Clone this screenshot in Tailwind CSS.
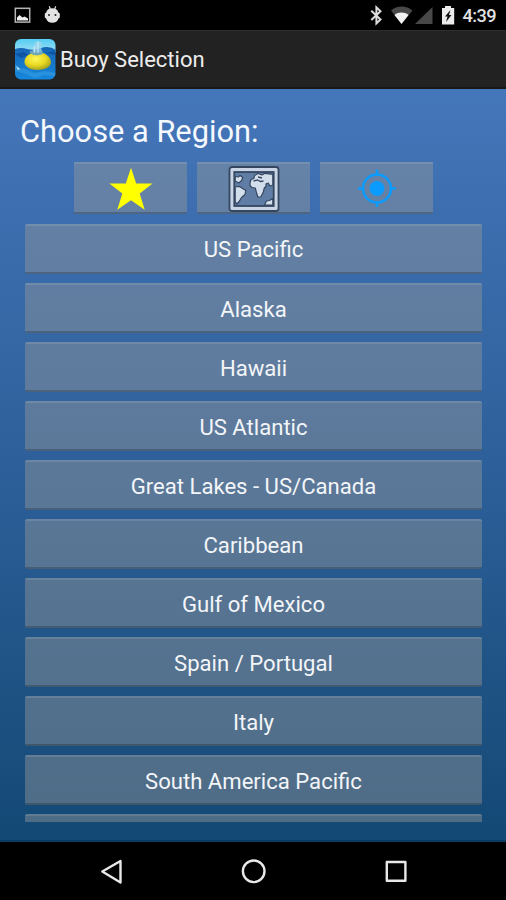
<!DOCTYPE html>
<html lang="en">
<head>
<meta charset="utf-8">
<title>Buoy Selection</title>
<script src="https://cdn.jsdelivr.net/npm/@tailwindcss/browser@4"></script>
</head>
<body class="bg-black">
<div class="w-[506px] h-[900px] flex flex-col overflow-hidden bg-black font-[Roboto,'Liberation_Sans',sans-serif]">
  <!-- Status bar -->
  <div class="h-[30px] shrink-0 flex items-center">
    <svg class="w-[506px] h-[30px]" viewBox="0 0 506 30">
      <rect x="15.3" y="8.3" width="14.4" height="13.8" fill="none" stroke="#b5b5b5" stroke-width="1.5"/>
      <path d="M17 20.500v-3l2.500-2.500 3 2.500 2-1 3.500 2v2z" fill="#eee"/>
      <path d="M49.300 6.300l1 3M55.700 6.300l-1 3" stroke="#d0d0d0" stroke-width="1.300"/>
      <path d="M46.200 12.500c.8-3 3-4.300 6.100-4.300s5.300 1.300 6.100 4.300l1.400 1v4l-1.300 1c-.7 2.800-3 4.300-6.200 4.300s-5.500-1.500-6.200-4.300l-1.300-1v-4z" fill="#e4e4e4"/>
      <circle cx="49" cy="15" r="1" fill="#222"/><circle cx="55.500" cy="15" r="1" fill="#222"/>
      <path d="M371.300 10.800l9.200 8.700-4.100 4V7.300l4.100 4-9.200 8.700" fill="none" stroke="#ddd" stroke-width="2"/>
      <path d="M391 10.500C397 5 406 5 412.500 10.500L401.500 24z" fill="#484848"/>
      <path d="M394.500 15C398.500 11.800 404.500 11.800 408.500 15L401.500 24z" fill="#f2f2f2"/>
      <path d="M432.500 7v17H415z" fill="#484848"/>
      <path d="M442 8h3V6h6v2h3.200v16.500H442z" fill="#ececec"/>
      <path d="M450.500 10l-5.500 6.500h2.500l-1.500 5.500 5.500-7h-2.500z" fill="#111"/>
      <text x="462.500" y="22.300" font-size="18.200" font-weight="500" fill="#e2e2e2" textLength="34">4:39</text>
    </svg>
  </div>
  <!-- Action bar -->
  <div class="h-[58.5px] shrink-0 bg-[#222] border-t border-[#2e2e2e] border-b-2 border-b-[#171713] flex items-center pl-[15px] pt-[2px]">
    <svg class="w-[41px] h-[41px] shrink-0" viewBox="0 0 41 41">
      <defs>
        <clipPath id="tile"><rect width="40.500" height="40.500" rx="6"/></clipPath>
        <linearGradient id="sky" x1="0" y1="0" x2="0" y2="1"><stop offset="0" stop-color="#54cdf2"/><stop offset="1" stop-color="#a5e0f5"/></linearGradient>
        <linearGradient id="sea" x1="0" y1="0" x2="0" y2="1"><stop offset="0" stop-color="#1765b4"/><stop offset="1" stop-color="#1688dd"/></linearGradient>
        <radialGradient id="buoy" cx=".42" cy=".35" r=".7"><stop offset="0" stop-color="#fff75a"/><stop offset=".55" stop-color="#e8d821"/><stop offset="1" stop-color="#9c9a20"/></radialGradient>
      </defs>
      <g clip-path="url(#tile)">
        <rect width="41" height="14" fill="url(#sky)"/>
        <path d="M0 10q6-2 12 0t14-1 15 2v30H0z" fill="url(#sea)"/>
        <path d="M0 15l9-2 5 3-8 3z M30 14l11-2v4z" fill="#0c4b96" opacity=".7"/>
        <path d="M0 25l5 4 6 1 8 4 11-2 11 2v3l-12-1-9 3-9-4-11-3z" fill="#57b9ee" opacity=".3"/>
        <path d="M1 27l4 3-2 1z" fill="#d5f0fb"/>
        <path d="M15 17l4-9 1-5h7l-1 5 2 9z" fill="#9ed6e8" opacity=".75"/>
        <path d="M9.500 23c0-4 3-7 6-8.500 4 2.500 10 2 13-.5 4 2 7.500 5 7.500 9.500 0 4.500-6 7.500-13.500 7.500S9.500 27.500 9.500 23z" fill="url(#buoy)"/>
        <path d="M14.500 13.500q7 5 14 1l-1-2q-6 2-12-1z" fill="#6fa5b9"/>
        <path d="M23 2v12M19.500 7v7" stroke="#dceff5" stroke-width="1.200" opacity=".7"/>
      </g>
    </svg>
    <div class="ml-[4px] text-[22px] leading-[28px] text-[#ececec] whitespace-nowrap pt-[1px]">Buoy Selection</div>
  </div>
  <!-- Content -->
  <div class="h-[753.5px] shrink-0 flex flex-col bg-linear-to-b from-[#4476ba] via-[#2d609a] to-[#134975] border-b-2 border-[#0b3a60]">
    <div class="h-[73.5px] shrink-0 pl-[20px] pt-[23px] text-[30.8px] leading-[40px] text-[#f5f8fc] whitespace-nowrap">Choose a Region:</div>
    <div class="flex gap-[10px] pl-[74px] h-[61.5px] shrink-0">
      <div class="w-[113px] h-[52px] rounded-[1px] bg-[#949699]/45 border-t-2 border-t-white/10 border-b-2 border-b-black/20 flex items-center justify-center pt-[2px]">
        <svg class="w-[44px] h-[44px]" viewBox="0 0 44 44"><path d="M22 .8l5.200 15.700h16.400L30.700 26.500l5 16.200L22 33.300 8.300 42.700l5-16.200L.4 16.500h16.400z" fill="#ff0"/></svg>
      </div>
      <div class="w-[113px] h-[52px] rounded-[1px] bg-[#949699]/45 border-t-2 border-t-white/10 border-b-2 border-b-black/20 flex items-center justify-center pt-[2px]">
        <svg class="w-[52px] h-[46px]" viewBox="0 0 52 46">
          <rect x="1.500" y="1" width="49" height="44" rx="2.500" fill="#c9d5e6" stroke="#35475f" stroke-width="1.800"/>
          <rect x="6.300" y="6" width="39.400" height="34" fill="#607da5" stroke="#35475f" stroke-width="1.800"/>
          <g fill="#d3deed" stroke="#35475f" stroke-width="1.200" stroke-linejoin="round">
            <path d="M7.200 10.500l3 .5 2-1.500 2.500 2-1 3-3 2.500-3.500-2z"/>
            <path d="M7.200 21l4-.7 3 2 3.600 2.200-.8 4-3.500 3-2 3.500-2.500 3-1.800-2z"/>
            <path d="M22 17l1-3.500 3-1 .5-3L30 7.500l4 1.500 3-1.700 7.800 1V19l-3 1-1.500-3-2.500 1 .5 2-2 2-1 4-2.500 5h-3l-1.500-5-1-4-3.500-.5-1.800-2z"/>
            <path d="M36.500 39l2-4 3-.5 3.300-2V39z"/>
          </g>
          <path d="M25.500 15l4-1 3 1.500 3-.5M30 11l4 1" fill="none" stroke="#35475f" stroke-width="1.300"/>
        </svg>
      </div>
      <div class="w-[113px] h-[52px] rounded-[1px] bg-[#949699]/45 border-t-2 border-t-white/10 border-b-2 border-b-black/20 flex items-center justify-center">
        <svg class="w-[38px] h-[38px]" viewBox="0 0 38 38"><circle cx="19" cy="19.500" r="7.400" fill="#0a9bff"/><circle cx="19" cy="19.500" r="14" fill="none" stroke="#0a9bff" stroke-width="2.500"/><path d="M19 .5v6M19 32.500v6M0 19.500h6M32 19.500h6" stroke="#0a9bff" stroke-width="2.500"/></svg>
      </div>
    </div>
    <!-- Scrolling region list -->
    <div id="regions" class="ml-[25px] mr-[24px] h-[598.5px] shrink-0 overflow-hidden flex flex-col gap-[9.1px] text-[22.1px] text-[#f3f5f8]"></div>
  </div>
  <!-- Navigation bar -->
  <div class="h-[58px] shrink-0 bg-black">
    <svg class="w-[506px] h-[58px]" viewBox="0 0 506 58" fill="none" stroke="#e8e8e8" stroke-width="2.400" stroke-linejoin="round">
      <path d="M120.500 19v21.500L102.300 29.500z"/>
      <circle cx="253.700" cy="29.300" r="10.800"/>
      <rect x="386.800" y="20" width="18.600" height="18.800"/>
    </svg>
  </div>
</div>
<script>
const regions = ["US Pacific","Alaska","Hawaii","US Atlantic","Great Lakes - US/Canada","Caribbean","Gulf of Mexico","Spain / Portugal","Italy","South America Pacific",""];
document.getElementById("regions").innerHTML = regions.map(name =>
  `<div class="h-[50px] shrink-0 rounded-[2px] bg-[#949699]/45 border-t-2 border-t-white/10 border-b-2 border-b-black/20 flex items-center justify-center pt-[3px] whitespace-nowrap">${name}</div>`).join("");
</script>
</body>
</html>
